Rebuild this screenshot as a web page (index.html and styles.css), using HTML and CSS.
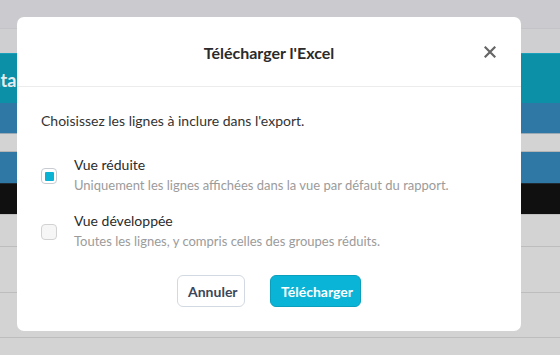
FILE: index.html
```html
<!DOCTYPE html>
<html lang="fr">
<head>
    <meta charset="UTF-8">
    <meta name="viewport" content="width=device-width, initial-scale=1.0">
    <title>Télécharger l'Excel</title>
    <link rel="stylesheet" href="styles.css">
</head>
<body>
    <div class="page">
        <div class="row row-top"></div>
        <div class="row row-sub"></div>
        <div class="row row-teal"><span class="row-label">Data</span></div>
        <div class="row row-blue"></div>
        <div class="row row-gap"></div>
        <div class="row row-blue row-blue2"></div>
        <div class="row row-dark"></div>
        <div class="row row-grey r1"></div>
        <div class="row row-grey r2"></div>
        <div class="row row-grey r3"></div>
        <div class="row row-grey r4"></div>
    </div>

    <div class="modal">
        <header class="modal-header">
            <h2 class="modal-title">Télécharger l'Excel</h2>
            <button class="close-btn" aria-label="Fermer">
                <svg width="12" height="12" viewBox="0 0 12 12">
                    <path d="M1.5 1.5 L10.5 10.5 M10.5 1.5 L1.5 10.5" stroke="#666" stroke-width="2.2" stroke-linecap="square"/>
                </svg>
            </button>
        </header>

        <div class="modal-body">
            <p class="intro">Choisissez les lignes à inclure dans l'export.</p>

            <label class="option">
                <span class="check checked"></span>
                <span class="option-text">
                    <span class="option-title">Vue réduite</span>
                    <span class="option-desc">Uniquement les lignes affichées dans la vue par défaut du rapport.</span>
                </span>
            </label>

            <label class="option">
                <span class="check"></span>
                <span class="option-text">
                    <span class="option-title">Vue développée</span>
                    <span class="option-desc">Toutes les lignes, y compris celles des groupes réduits.</span>
                </span>
            </label>
        </div>

        <footer class="modal-footer">
            <button class="btn btn-cancel">Annuler</button>
            <button class="btn btn-primary">Télécharger</button>
        </footer>
    </div>
</body>
</html>
```

FILE: styles.css
```css
* {
    margin: 0;
    padding: 0;
    box-sizing: border-box;
}

body {
    font-family: 'Lato', sans-serif;
    background: #d3d3d3;
    width: 560px;
    height: 355px;
    overflow: hidden;
    position: relative;
}

/* page behind the overlay */
.page {
    display: flex;
    flex-direction: column;
}

.row {
    width: 100%;
}

.row-top {
    height: 29px;
    background: #cbcbcf;
    border-bottom: 1px solid #c4c4c8;
}

.row-sub {
    height: 24px;
    background: #cfcfd2;
}

.row-teal {
    height: 50px;
    background: #0b90a8;
    border-top: 1px solid #1aa0b8;
    display: flex;
    align-items: center;
    padding-top: 2px;
}

.row-label {
    color: #e3edf0;
    font-weight: 700;
    font-size: 18px;
    white-space: nowrap;
    margin-left: -22px;
}

.row-blue {
    height: 31px;
    background: #2f78a5;
    border-bottom: 1px solid #9aa9b4;
}

.row-gap {
    height: 17px;
    background: #d3d3d3;
}

.row-blue2 {
    height: 33px;
    border-top: 1px solid #b5b5b5;
    border-bottom: 1px solid #1f2a33;
}

.row-dark {
    height: 30px;
    background: #101010;
}

.row-grey {
    background: #d3d3d3;
    border-bottom: 1px solid #bdbdbd;
}

.r1 { height: 33px; border-top: 1px solid #c0c0c0; }
.r2 { height: 46px; }
.r3 { height: 45px; }
.r4 { height: 20px; border-bottom: none; }

/* modal */
.modal {
    position: absolute;
    left: 17px;
    top: 17px;
    width: 504px;
    height: 314px;
    background: #fff;
    border-radius: 7px;
    display: flex;
    flex-direction: column;
}

.modal-header {
    height: 70px;
    border-bottom: 1px solid #ececec;
    display: flex;
    align-items: center;
    justify-content: center;
    position: relative;
}

.modal-title {
    font-size: 16px;
    font-weight: 700;
    color: #2b2b2b;
    padding-top: 1px;
}

.close-btn {
    position: absolute;
    right: 25px;
    top: 29px;
    width: 12px;
    height: 12px;
    border: none;
    background: none;
    display: flex;
}

.modal-body {
    padding: 24px 24px 0;
}

.intro {
    font-size: 14px;
    line-height: 20px;
    color: #333;
    margin-bottom: 24px;
}

.option {
    display: flex;
    align-items: center;
    gap: 17px;
    margin-bottom: 16px;
}

.check {
    width: 16px;
    height: 16px;
    border: 1px solid #d2d2d2;
    border-radius: 4px;
    background: #f6f6f6;
    flex-shrink: 0;
    display: flex;
    align-items: center;
    justify-content: center;
    margin-top: 2px;
}

.check.checked {
    background: #fff;
    border-color: #c6ccd2;
}

.check.checked::after {
    content: '';
    width: 9px;
    height: 9px;
    background: #0ab3d4;
    border-radius: 1px;
}

.option-text {
    display: flex;
    flex-direction: column;
}

.option-title {
    font-size: 14px;
    line-height: 20px;
    color: #2b2b2b;
}

.option-desc {
    font-size: 13px;
    line-height: 20px;
    color: #9b9b9b;
}

.modal-footer {
    display: flex;
    justify-content: center;
    gap: 25px;
    padding-top: 8px;
}

.btn {
    height: 32px;
    border-radius: 6px;
    font-family: 'Lato', sans-serif;
    font-size: 14px;
    font-weight: 700;
    padding: 0 10px;
    cursor: pointer;
}

.btn-cancel {
    width: 68px;
    background: #fff;
    border: 1px solid #d2d9e2;
    color: #3c4658;
}

.btn-primary {
    width: 91px;
    background: #0ab4d6;
    border: 1px solid #0a9fbd;
    color: #fff;
}
```
